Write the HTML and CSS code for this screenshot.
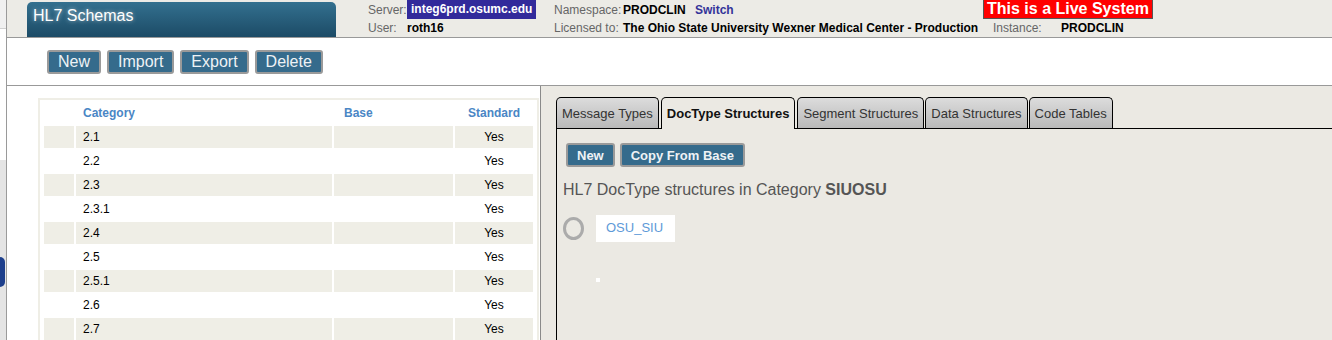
FILE: index.html
```html
<!DOCTYPE html>
<html lang="en">
<head>
    <meta charset="UTF-8">
    <title>HL7 Schemas</title>
    <link rel="stylesheet" href="styles.css">
</head>
<body>
    <div class="page">
        <div class="side-strip">
            <div class="strip-top"></div>
            <div class="strip-mid"></div>
            <div class="strip-low"><span class="strip-blob"></span></div>
        </div>
        <div class="window">
            <div class="topbar">
                <div class="title-tab">HL7 Schemas</div>
                <div class="info">
                    <span class="lbl">Server:</span>
                    <span><span class="server-badge">integ6prd.osumc.edu</span></span>
                    <span class="lbl">Namespace:</span>
                    <span><b>PRODCLIN</b> <a class="switch">Switch</a></span>
                    <span><span class="live">This is a Live System</span></span>
                    <span></span>

                    <span class="lbl">User:</span>
                    <span class="val">roth16</span>
                    <span class="lbl">Licensed to:</span>
                    <span class="val">The Ohio State University Wexner Medical Center - Production</span>
                    <span class="lbl inst">Instance:</span>
                    <span class="val">PRODCLIN</span>
                </div>
            </div>

            <div class="toolbar">
                <button class="btn">New</button>
                <button class="btn">Import</button>
                <button class="btn">Export</button>
                <button class="btn">Delete</button>
            </div>

            <div class="main">
                <div class="list-pane">
                    <div class="table-box">
                        <table class="cat-table">
                            <thead>
                                <tr><th class="c0"></th><th class="c1">Category</th><th class="c2">Base</th><th class="c3">Standard</th></tr>
                            </thead>
                            <tbody>
                                <tr class="odd"><td></td><td>2.1</td><td></td><td class="c3">Yes</td></tr>
                                <tr><td></td><td>2.2</td><td></td><td class="c3">Yes</td></tr>
                                <tr class="odd"><td></td><td>2.3</td><td></td><td class="c3">Yes</td></tr>
                                <tr><td></td><td>2.3.1</td><td></td><td class="c3">Yes</td></tr>
                                <tr class="odd"><td></td><td>2.4</td><td></td><td class="c3">Yes</td></tr>
                                <tr><td></td><td>2.5</td><td></td><td class="c3">Yes</td></tr>
                                <tr class="odd"><td></td><td>2.5.1</td><td></td><td class="c3">Yes</td></tr>
                                <tr><td></td><td>2.6</td><td></td><td class="c3">Yes</td></tr>
                                <tr class="odd"><td></td><td>2.7</td><td></td><td class="c3">Yes</td></tr>
                            </tbody>
                        </table>
                    </div>
                </div>

                <div class="detail-pane">
                    <div class="tabs">
                        <div class="tab">Message Types</div>
                        <div class="tab active">DocType Structures</div>
                        <div class="tab">Segment Structures</div>
                        <div class="tab">Data Structures</div>
                        <div class="tab">Code Tables</div>
                    </div>
                    <div class="tab-body">
                        <div class="actions">
                            <button class="btn small">New</button>
                            <button class="btn small">Copy From Base</button>
                        </div>
                        <div class="heading">HL7 DocType structures in Category <b>SIUOSU</b></div>
                        <div class="item">
                            <span class="ring"></span>
                            <span class="item-box">OSU_SIU</span>
                        </div>
                        <div class="dot"></div>
                    </div>
                </div>
            </div>
        </div>
    </div>
</body>
</html>
```

FILE: styles.css
```css
body {
    margin: 0;
    font-family: "Liberation Sans", Arial, sans-serif;
    font-size: 12px;
    color: #000;
    background-color: #fff;
    overflow: hidden;
}
.page {
    display: flex;
    height: 340px;
}
.side-strip {
    width: 6px;
    display: flex;
    flex-direction: column;
    border-right: 1px solid #9a9a9a;
}
.strip-top {
    height: 28px;
    background-color: #f0f0f0;
    border-bottom: 1px solid #d0d0d0;
}
.strip-mid {
    height: 131px;
    background-color: #fff;
}
.strip-low {
    flex: 1;
    background-color: #e4e4e4;
    position: relative;
}
.strip-blob {
    position: absolute;
    left: 0;
    top: 97px;
    width: 5px;
    height: 30px;
    border-radius: 0 6px 6px 0;
    background-color: #1d3f8c;
}
.window {
    flex: 1;
    display: flex;
    flex-direction: column;
}
.topbar {
    height: 37px;
    display: flex;
    background-color: #ecebe6;
    border-bottom: 1px solid #999;
}
.title-tab {
    margin: 2px 0 0 20px;
    width: 309px;
    height: 35px;
    padding-left: 6px;
    box-sizing: border-box;
    border-radius: 5px 5px 0 0;
    background: linear-gradient(#33708f, #1c4b66);
    color: #fff;
    font-size: 16px;
    line-height: 28px;
    text-shadow: 0 0 4px rgba(255, 255, 255, 0.6);
}
.info {
    margin-left: 32px;
    display: grid;
    grid-template-columns: 39px 147px 69px 360px 78px auto;
    grid-template-rows: 19px 18px;
    align-items: center;
    white-space: nowrap;
}
.lbl {
    color: #666;
}
.val {
    font-weight: bold;
}
.inst {
    padding-left: 10px;
}
.server-badge {
    display: inline-block;
    background-color: #322a9b;
    color: #fff;
    font-weight: bold;
    padding: 2px 4px 3px;
}
.switch {
    color: #333399;
    font-weight: bold;
    margin-left: 6px;
}
.live {
    display: inline-block;
    background-color: #f00;
    color: #fff;
    font-weight: bold;
    font-size: 16px;
    line-height: 18px;
    padding: 0 3px;
    border: 1px solid #555;
    border-top: 0;
}
.toolbar {
    height: 48px;
    display: flex;
    align-items: flex-start;
    gap: 6px;
    padding: 12px 0 0 40px;
    box-sizing: border-box;
    background-color: #fff;
    border-bottom: 1px solid #999;
}
.btn {
    height: 24px;
    padding: 0 9px;
    border: 2px solid #9a9a9a;
    border-radius: 3px;
    background-color: #356b8c;
    color: #eef2f5;
    font-family: "Liberation Sans", Arial, sans-serif;
    font-size: 16px;
}
.btn.small {
    font-size: 13px;
    font-weight: bold;
    padding: 0 9px;
}
.main {
    flex: 1;
    display: flex;
    min-height: 0;
}
.list-pane {
    width: 533px;
    background-color: #fff;
    padding: 12px 0 0 31px;
    box-sizing: border-box;
}
.table-box {
    width: 501px;
    border: 2px solid #efeee6;
    border-bottom: 0;
    padding: 0 2px;
    box-sizing: border-box;
}
.cat-table {
    width: 100%;
    border-spacing: 2px;
    table-layout: fixed;
}
.cat-table th {
    height: 22px;
    color: #4a86c5;
    font-weight: bold;
    text-align: left;
    padding: 0 0 0 7px;
}
.cat-table td {
    height: 22px;
    padding: 0 0 0 7px;
}
.cat-table .c0 {
    width: 30px;
    padding: 0;
}
.cat-table .c2 {
    width: 109px;
    padding-left: 10px;
}
.cat-table .c3 {
    width: 78px;
    text-align: center;
    padding: 0;
}
.cat-table tr.odd td {
    background-color: #efeee6;
}
.detail-pane {
    flex: 1;
    background-color: #ebe9e3;
    border-left: 1px solid #8a8a8a;
    padding: 11px 0 0 15px;
    display: flex;
    flex-direction: column;
}
.tabs {
    display: flex;
    gap: 1px;
    border-bottom: 1px solid #000;
}
.tab {
    height: 30px;
    line-height: 31px;
    padding: 0 5px;
    border: 1px solid #000;
    border-bottom: 0;
    border-radius: 5px 5px 0 0;
    background: linear-gradient(#dcdcdc, #b9b9b9);
    color: #333;
    font-size: 13px;
    white-space: nowrap;
}
.tab.active {
    background: #ebe9e3;
    font-weight: bold;
    color: #111;
    margin: 0 1px -1px;
    height: 31px;
}
.tab-body {
    flex: 1;
    border-left: 1px solid #000;
    padding: 14px 0 0 6px;
}
.actions {
    display: flex;
    gap: 5px;
    padding-left: 3px;
}
.heading {
    margin-top: 14px;
    font-size: 16px;
    color: #555;
}
.item {
    margin-top: 16px;
    display: flex;
    align-items: center;
    gap: 12px;
}
.ring {
    width: 15px;
    height: 17px;
    border: 3px solid #ababab;
    border-radius: 50%;
}
.item-box {
    width: 79px;
    height: 27px;
    line-height: 25px;
    padding-left: 10px;
    box-sizing: border-box;
    background-color: #fff;
    color: #5e9ad8;
    font-size: 13px;
}
.dot {
    margin: 36px 0 0 33px;
    width: 4px;
    height: 4px;
    background-color: #fff;
}
```
